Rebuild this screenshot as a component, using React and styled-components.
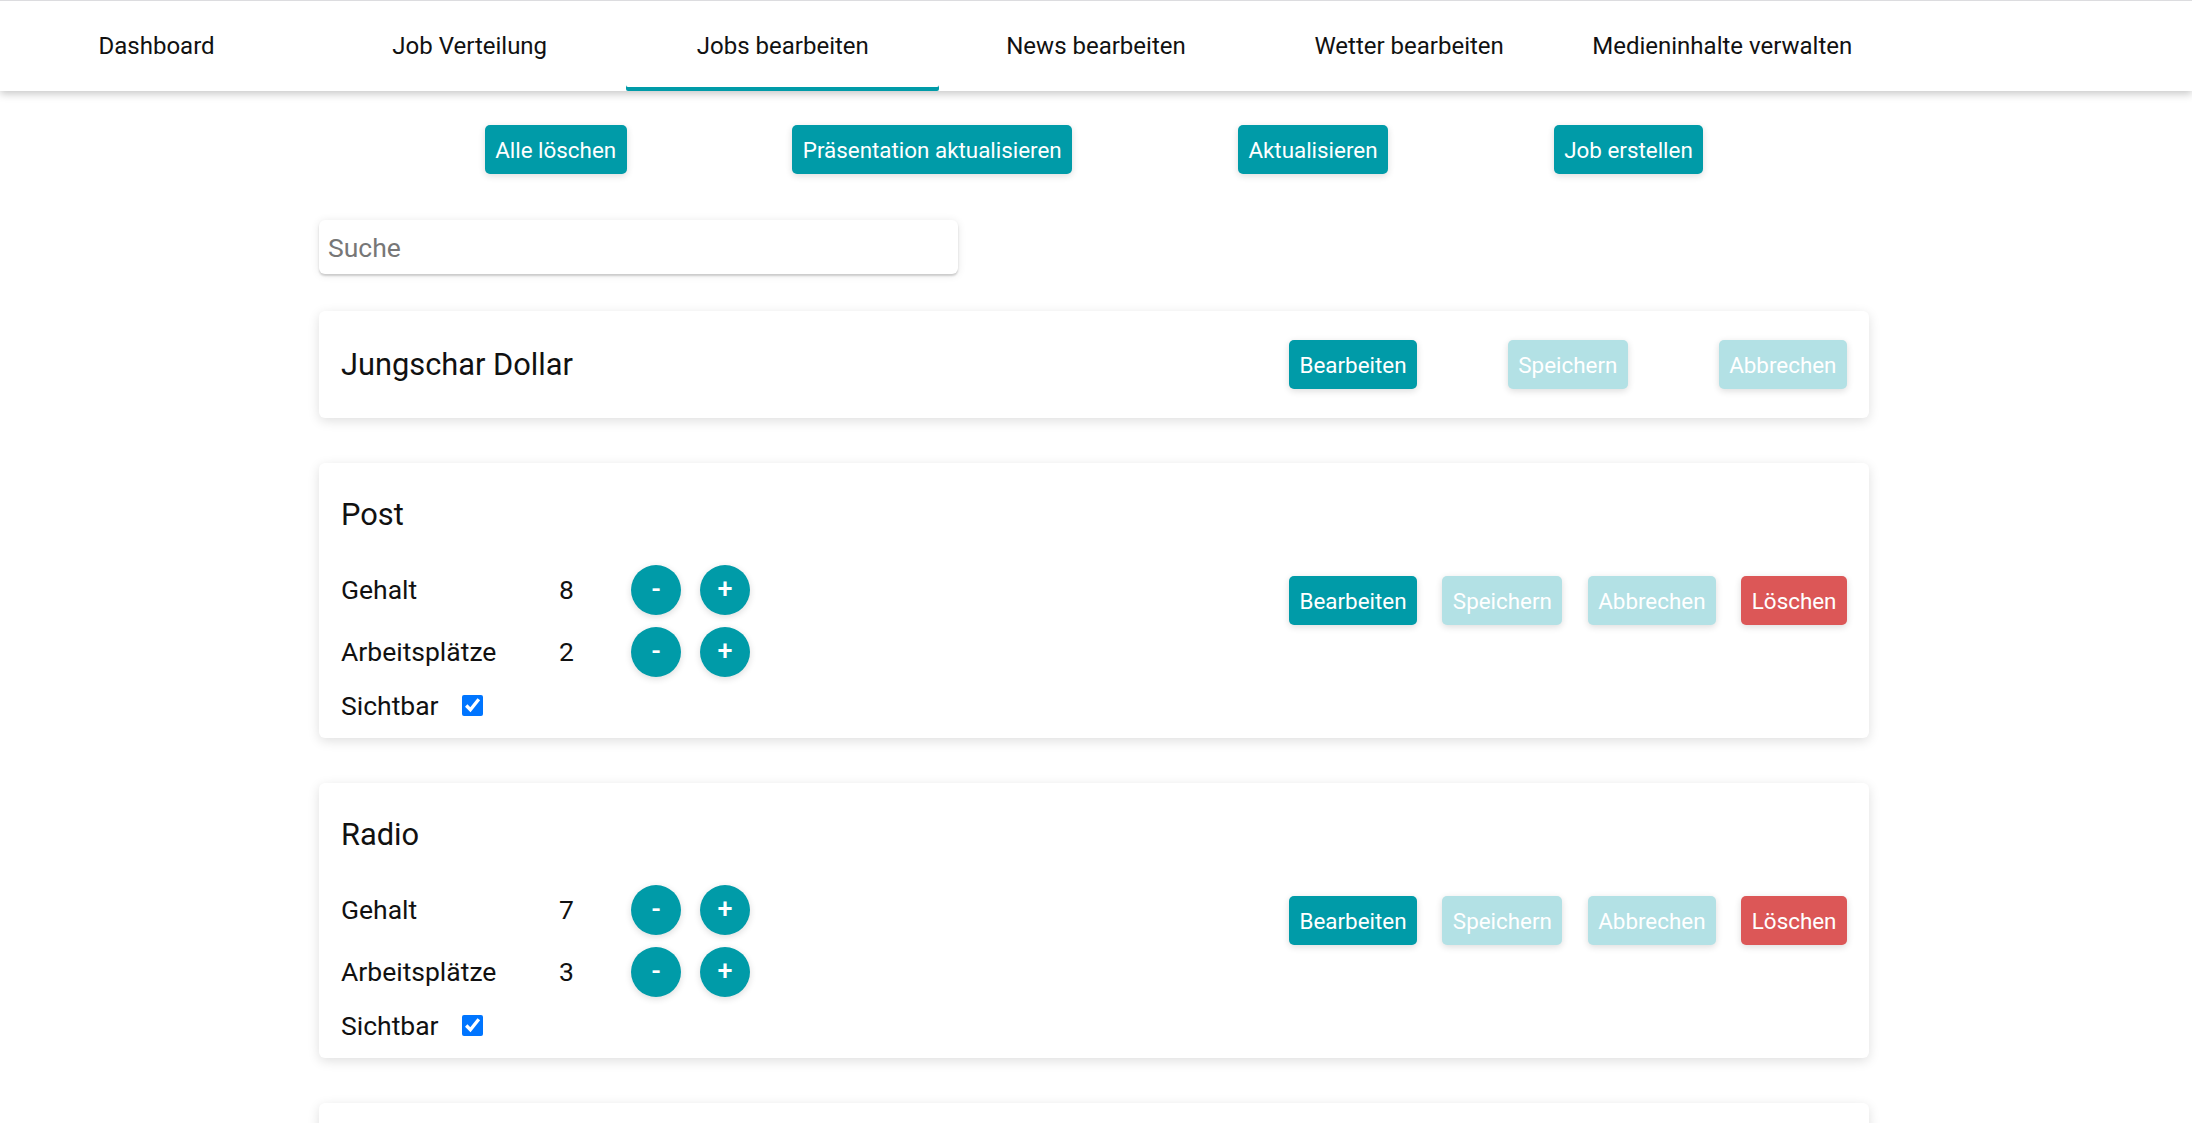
import React, { useState } from 'react';
import styled, { createGlobalStyle } from 'styled-components';

const TEAL = '#009ba8';
const TEAL_LIGHT = '#b3e1e5';
const RED = '#dc5757';

const GlobalStyle = createGlobalStyle`
	html {
		scrollbar-width: none;
	}
	html::-webkit-scrollbar {
		display: none;
	}
	body {
		margin: 0;
		background: #fff;
		font-family: Roboto, 'Liberation Sans', Arial, sans-serif;
		color: #111;
	}
	* {
		box-sizing: border-box;
	}
`;

const NavBar = styled.nav`
	display: flex;
	height: 91px;
	background: #fff;
	border-top: 1px solid #dcdcdf;
	box-shadow: 0 3px 8px rgba(0, 0, 0, 0.22);
`;

const Tab = styled.div`
	width: calc(100% / 7);
	display: flex;
	align-items: center;
	justify-content: center;
	font-size: 24px;
	color: #111;
	cursor: pointer;
	box-shadow: ${(p) => (p.$active ? `inset 0 -4px 0 ${TEAL}` : 'none')};
	border-radius: 0 0 2px 2px;
`;

const Main = styled.main`
	width: 1550px;
	margin-left: calc(50% - 777px);
	padding-bottom: 40px;
`;

const Toolbar = styled.div`
	display: flex;
	justify-content: space-evenly;
	margin-top: 34px;
`;

const Btn = styled.button`
	height: 49px;
	padding: 0 10.5px;
	border: none;
	border-radius: 5px;
	font-family: inherit;
	font-size: 22.4px;
	font-weight: 400;
	color: #fff;
	background: ${(p) =>
		p.$variant === 'danger' ? RED : p.disabled ? TEAL_LIGHT : TEAL};
	box-shadow: 0 2px 7px rgba(0, 0, 0, 0.14);
	cursor: ${(p) => (p.disabled ? 'default' : 'pointer')};
	white-space: nowrap;
`;

const Search = styled.input`
	display: block;
	margin-top: 46px;
	width: 639px;
	height: 54px;
	padding: 0 9px;
	border: none;
	border-radius: 6px;
	font-family: inherit;
	font-size: 26.5px;
	color: #333;
	box-shadow: 0 2px 2px rgba(0, 0, 0, 0.16), 0 1px 8px rgba(0, 0, 0, 0.1);
	outline: none;
	&::placeholder {
		color: #777;
	}
`;

const CardList = styled.div`
	display: flex;
	flex-direction: column;
	gap: 45px;
	margin-top: 37px;
`;

const Card = styled.section`
	display: flex;
	align-items: center;
	justify-content: space-between;
	min-height: ${(p) => (p.$compact ? '107px' : '275px')};
	padding: 0 22px;
	background: #fff;
	border-radius: 6px;
	box-shadow: 0 3px 12px rgba(0, 0, 0, 0.13);
`;

const Details = styled.div`
	display: flex;
	flex-direction: column;
	padding: 32px 0 14px;
`;

const Title = styled.h3`
	margin: 0;
	font-size: 30.8px;
	font-weight: 400;
	line-height: 37px;
	margin-bottom: ${(p) => (p.$compact ? '0' : '32px')};
`;

const Row = styled.div`
	display: flex;
	align-items: center;
	height: ${(p) => (p.$short ? '37px' : '50px')};
	margin-top: ${(p) => p.$mt || 0}px;
`;

const Label = styled.span`
	width: ${(p) => (p.$auto ? 'auto' : '218px')};
	font-size: 26.5px;
	line-height: 37px;
`;

const Value = styled.span`
	width: 72px;
	font-size: 26.5px;
	line-height: 37px;
`;

const RoundBtn = styled.button`
	width: 50px;
	height: 50px;
	border: none;
	border-radius: 50%;
	background: ${TEAL};
	color: #fff;
	font-family: inherit;
	font-size: 27px;
	font-weight: 500;
	line-height: 1;
	padding: 0 0 1px;
	box-shadow: 0 2px 7px rgba(0, 0, 0, 0.14);
	cursor: pointer;
	& + & {
		margin-left: 19px;
	}
`;

const Check = styled.input`
	width: 21px;
	height: 21px;
	margin: 0 0 0 23px;
	accent-color: #0075ff;
`;

const Actions = styled.div`
	display: flex;
	justify-content: space-between;
	width: 558px;
`;

const jobs = [
	{ name: 'Post', gehalt: 8, plaetze: 2 },
	{ name: 'Radio', gehalt: 7, plaetze: 3 },
	{ name: 'Bank', gehalt: 9, plaetze: 2 },
];

const JobCard = ({ job }) => {
	const [gehalt, setGehalt] = useState(job.gehalt);
	const [plaetze, setPlaetze] = useState(job.plaetze);

	return (
		<Card>
			<Details>
				<Title>{job.name}</Title>
				<Row>
					<Label>Gehalt</Label>
					<Value>{gehalt}</Value>
					<RoundBtn onClick={() => setGehalt(gehalt - 1)}>-</RoundBtn>
					<RoundBtn onClick={() => setGehalt(gehalt + 1)}>+</RoundBtn>
				</Row>
				<Row $mt={12}>
					<Label>Arbeitsplätze</Label>
					<Value>{plaetze}</Value>
					<RoundBtn onClick={() => setPlaetze(plaetze - 1)}>-</RoundBtn>
					<RoundBtn onClick={() => setPlaetze(plaetze + 1)}>+</RoundBtn>
				</Row>
				<Row $short $mt={10}>
					<Label $auto>Sichtbar</Label>
					<Check type="checkbox" defaultChecked />
				</Row>
			</Details>
			<Actions>
				<Btn>Bearbeiten</Btn>
				<Btn disabled>Speichern</Btn>
				<Btn disabled>Abbrechen</Btn>
				<Btn $variant="danger">Löschen</Btn>
			</Actions>
		</Card>
	);
};

const tabs = [
	'Dashboard',
	'Job Verteilung',
	'Jobs bearbeiten',
	'News bearbeiten',
	'Wetter bearbeiten',
	'Medieninhalte verwalten',
];

const App = () => {
	return (
		<>
			<GlobalStyle />
			<NavBar>
				{tabs.map((t) => (
					<Tab key={t} $active={t === 'Jobs bearbeiten'}>
						{t}
					</Tab>
				))}
			</NavBar>
			<Main>
				<Toolbar>
					<Btn>Alle löschen</Btn>
					<Btn>Präsentation aktualisieren</Btn>
					<Btn>Aktualisieren</Btn>
					<Btn>Job erstellen</Btn>
				</Toolbar>
				<Search placeholder="Suche" />
				<CardList>
					<Card $compact>
						<Title $compact>Jungschar Dollar</Title>
						<Actions>
							<Btn>Bearbeiten</Btn>
							<Btn disabled>Speichern</Btn>
							<Btn disabled>Abbrechen</Btn>
						</Actions>
					</Card>
					{jobs.map((job) => (
						<JobCard key={job.name} job={job} />
					))}
				</CardList>
			</Main>
		</>
	);
};

export default App;
